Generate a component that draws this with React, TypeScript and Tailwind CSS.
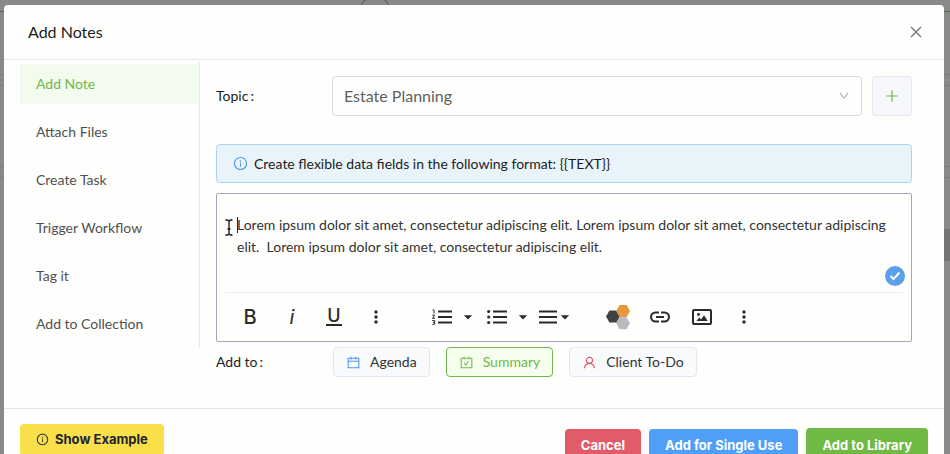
import React from "react";
import {
  AiOutlineCalendar,
  AiOutlineCarryOut,
  AiOutlineClose,
  AiOutlineDown,
  AiOutlineInfoCircle,
  AiOutlinePlus,
  AiOutlineUser,
} from "react-icons/ai";
import { MdArrowDropDown, MdMoreVert } from "react-icons/md";

const menuItems = ["Add Note", "Attach Files", "Create Task", "Trigger Workflow", "Tag it", "Add to Collection"];

const noteText =
  "Lorem ipsum dolor sit amet, consectetur adipiscing elit. Lorem ipsum dolor sit amet, consectetur adipiscing elit.  Lorem ipsum dolor sit amet, consectetur adipiscing elit.";

const NumberedListIcon = () => (
  <svg width="20" height="16" viewBox="0 0 20 16" fill="none" stroke="currentColor">
    <path d="M6 2.5h14M6 8h14M6 13.5h14" strokeWidth="2" />
    <path d="M.5 1h1.5v3.5M.3 6.2h2.4L.5 9.3h2.5M.3 11.5h2.4v3.8H.3M1 13.4h1.7" strokeWidth="1" />
  </svg>
);

const BulletListIcon = () => (
  <svg width="20" height="16" viewBox="0 0 20 16" fill="currentColor">
    <circle cx="1.7" cy="2.5" r="1.6" />
    <circle cx="1.7" cy="8" r="1.6" />
    <circle cx="1.7" cy="13.5" r="1.6" />
    <path d="M6 1.5h14v2H6zM6 7h14v2H6zM6 12.5h14v2H6z" />
  </svg>
);

const AlignIcon = () => (
  <svg width="18" height="16" viewBox="0 0 18 16" fill="currentColor">
    <path d="M0 1.5h18v2H0zM0 7h18v2H0zM0 12.5h18v2H0z" />
  </svg>
);

const HexagonsIcon = () => (
  <svg width="24" height="26" viewBox="0 0 24 26">
    <path d="M13.6 13.3h7l3.4 6-3.4 6h-7l-3.4-6z" fill="#b9babd" />
    <path d="M3.4 6.5h7l3.4 6-3.4 6h-7L0 12.5z" fill="#424244" />
    <path d="M13.6 1h7L24 7l-3.4 6h-7l-3.4-6z" fill="#e6983f" />
  </svg>
);

const LinkIcon = () => (
  <svg width="20" height="12" viewBox="0 0 20 12" fill="none" stroke="currentColor" strokeWidth="2">
    <path d="M9 1.5H5.5a4.5 4.5 0 0 0 0 9H9M11 1.5h3.5a4.5 4.5 0 0 1 0 9H11M6 6h8" />
  </svg>
);

const ImageIcon = () => (
  <svg width="20" height="16" viewBox="0 0 20 16">
    <rect x="1" y="1" width="18" height="14" rx="1" fill="none" stroke="currentColor" strokeWidth="2" />
    <circle cx="6.5" cy="5.5" r="1.4" fill="currentColor" />
    <path d="M4.5 12l2.8-3.4 1.7 1.8 3-4.2 3.7 5.8z" fill="currentColor" />
  </svg>
);

// Mouse pointer in its text selection shape
const TextCursorIcon = () => (
  <svg width="8" height="17" viewBox="0 0 8 17" fill="none" stroke="#111" strokeWidth="1.3">
    <path d="M.5 1h2L4 2.2 5.5 1h2M4 2v13M.5 16h2L4 14.8 5.5 16h2M2.5 10h3" />
  </svg>
);

const Toolbar = () => (
  <div className="mx-2 flex h-[49px] items-center border-t border-[#ececf2] pl-1 text-[#2a2a2a]">
    <button aria-label="Bold" className="w-[42px] font-[Inter] text-xl font-medium">B</button>
    <button aria-label="Italic" className="w-[42px] font-[Inter] text-xl italic">i</button>
    <button aria-label="Underline" className="flex w-[42px] justify-center">
      <span className="border-b-2 border-current px-px font-[Inter] text-lg leading-4 font-medium">U</span>
    </button>
    <button aria-label="More text options" className="flex w-[42px] justify-center"><MdMoreVert size={20} /></button>
    <button aria-label="Numbered list" className="ml-[35px] w-5"><NumberedListIcon /></button>
    <button aria-label="Numbered list styles" className="ml-1.5"><MdArrowDropDown size={20} /></button>
    <button aria-label="Bulleted list" className="ml-[9px] w-5"><BulletListIcon /></button>
    <button aria-label="Bulleted list styles" className="ml-1.5"><MdArrowDropDown size={20} /></button>
    <button aria-label="Align" className="ml-1.5 flex items-center">
      <AlignIcon />
      <MdArrowDropDown size={20} className="-ml-0.5" />
    </button>
    <button aria-label="Templates" className="ml-[31px]"><HexagonsIcon /></button>
    <button aria-label="Insert link" className="ml-5"><LinkIcon /></button>
    <button aria-label="Insert image" className="ml-[22px]"><ImageIcon /></button>
    <button aria-label="More options" className="ml-[22px]"><MdMoreVert size={20} /></button>
  </div>
);

const App = () => {
  return (
    <div className="relative h-screen overflow-hidden bg-[#898989] pt-[5px] pr-1.5 pl-1 font-[Lato,sans-serif] text-sm text-[#1c1c1c]">
      {/* Dimmed page behind the dialog */}
      <div className="absolute inset-x-0 top-[11px] h-px bg-[#4f6b4f]" />
      <div className="absolute -top-1 left-[359px] size-8 rounded-full border border-[#555]" />
      <div className="absolute inset-x-0 top-[74px] h-3 border-y border-[#7b7b7b]" />
      <div className="absolute inset-x-0 top-[166px] h-3 border-y border-[#7b7b7b]" />
      <div className="absolute top-[229px] right-0 h-8 w-2 bg-[#747474]" />

      <div role="dialog" aria-labelledby="dialog-title" className="relative rounded-t-[4px] bg-[#fefefd]">
        <header className="flex h-[55px] items-center justify-between border-b border-[#e4e5ee] px-6">
          <h1 id="dialog-title" className="text-base text-[#1c1c1c]">Add Notes</h1>
          <button aria-label="Close" className="-mr-1 text-[#777]"><AiOutlineClose size={16} /></button>
        </header>

        <div className="flex items-start px-4 pt-0.5">
          <nav className="flex w-[180px] shrink-0 flex-col gap-2 border-r border-[#e6e6ee] pt-0.5 pb-1">
            {menuItems.map((item, index) => (
              <a
                key={item}
                href="#"
                className={
                  index === 0
                    ? "flex h-10 shrink-0 items-center bg-[#f2fbee] px-4 text-[#70b84e]"
                    : "flex h-10 shrink-0 items-center px-4 text-[#505050]"
                }
              >
                {item}
              </a>
            ))}
          </nav>

          <main className="min-w-0 flex-1 pt-3.5 pr-4 pb-[31px] pl-4">
            <div className="flex h-10 items-center">
              <label htmlFor="topic" className="w-[116px] shrink-0">
                Topic<span className="ml-0.5">:</span>
              </label>
              <div className="relative flex-1">
                <select
                  id="topic"
                  className="h-10 w-full appearance-none rounded-[4px] border border-[#d9d9de] bg-transparent px-[11px] text-base text-[#606060]"
                >
                  <option>Estate Planning</option>
                </select>
                <AiOutlineDown size={12} className="pointer-events-none absolute top-3.5 right-3 text-[#a5a5a8]" />
              </div>
              <button
                aria-label="Add topic"
                className="ml-2.5 flex size-10 items-center justify-center rounded-[4px] border border-[#e4e7f0] bg-[#f5f7fb] text-[#6fb54b]"
              >
                <AiOutlinePlus size={16} />
              </button>
            </div>

            <div className="mt-7 flex h-[39px] items-center gap-1.5 rounded-[4px] border border-[#a9d4f3] bg-[#e8f4f9] px-4">
              <AiOutlineInfoCircle size={15} className="text-[#4d95e8]" />
              <span>{"Create flexible data fields in the following format: {{TEXT}}"}</span>
            </div>

            <div className="relative mt-2.5 rounded-[2px] border border-[#9fa9bc]">
              <textarea
                aria-label="Note"
                defaultValue={noteText}
                className="block h-[98px] w-full resize-none overflow-hidden bg-transparent pt-5 pr-4 pl-5 leading-[22px] text-[#333] outline-none"
              />
              <span className="absolute top-[23px] left-5 h-4 w-px bg-[#222]" />
              <span className="absolute top-[25px] left-2"><TextCursorIcon /></span>
              <span className="absolute top-[72px] right-1.5 flex size-5 items-center justify-center rounded-full bg-[#5a9fe9]">
                <svg width="12" height="10" viewBox="0 0 12 10" fill="none" stroke="#fff" strokeWidth="2">
                  <path d="M1.5 5l3 3 6-6.5" />
                </svg>
              </span>
              <Toolbar />
            </div>

            <div className="mt-[5px] flex h-[30px] items-center">
              <span className="w-[117px] shrink-0">
                Add to<span className="ml-0.5">:</span>
              </span>
              <div className="flex gap-4">
                <button className="flex h-[30px] items-center gap-[9px] rounded-[4px] border border-[#e2e6f0] bg-[#f8fafc] px-3 text-[#333]">
                  <AiOutlineCalendar size={15} className="text-[#4d95e8]" />
                  Agenda
                </button>
                <button className="flex h-[30px] items-center gap-[9px] rounded-[4px] border border-[#70b84e] bg-[#f6ffed] px-3 text-[#70b84e]">
                  <AiOutlineCarryOut size={15} />
                  Summary
                </button>
                <button className="flex h-[30px] items-center gap-[9px] rounded-[4px] border border-[#e2e6f0] bg-[#f8fafc] px-3 text-[#333]">
                  <AiOutlineUser size={15} className="text-[#dd5060]" />
                  Client To-Do
                </button>
              </div>
            </div>
          </main>
        </div>

        <footer className="flex items-start border-t border-[#e4e5ec] px-4 pt-[15px] pb-4 font-[Inter,sans-serif] text-[13px] font-bold text-white">
          <button className="flex h-[31px] items-center gap-1.5 rounded-[4px] bg-[#f9df49] px-4 text-[#223]">
            <AiOutlineInfoCircle size={13} />
            Show Example
          </button>
          <div className="ml-auto flex items-center gap-2 pt-1">
            <button className="h-8 rounded-[4px] bg-[#e15b6b] px-4">Cancel</button>
            <button className="h-8 rounded-[4px] bg-[#4f9ff8] px-4">Add for Single Use</button>
            <button className="h-[34px] rounded-[4px] bg-[#70b944] px-4">Add to Library</button>
          </div>
        </footer>
      </div>
    </div>
  );
};

export default App;
